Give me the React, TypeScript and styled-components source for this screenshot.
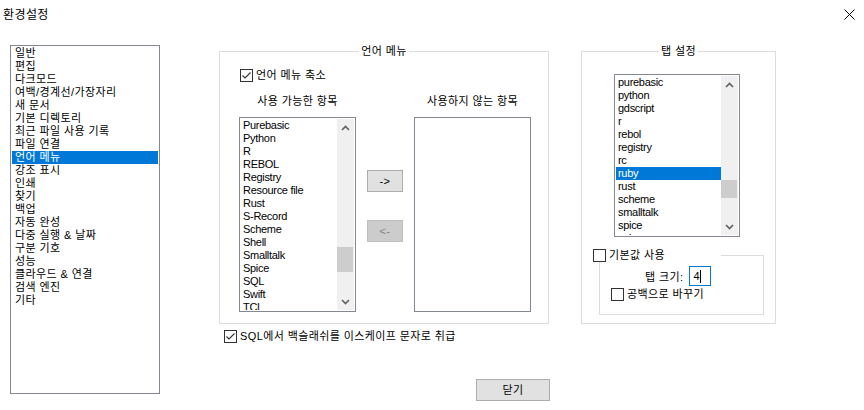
import styled, { createGlobalStyle } from 'styled-components';

const GlobalStyle = createGlobalStyle`
  html, body {
    margin: 0;
    padding: 0;
    background: #fff;
  }
  body {
    color: #000;
    font-family: 'Liberation Sans', 'Noto Sans CJK KR', sans-serif;
    font-size: 11px;
    letter-spacing: 0.4px;
  }
`;

const StyledWindow = styled.div`
  background: #fff;
  height: 410px;
  overflow: hidden;
  width: 864px;
`;

const StyledTitleBar = styled.div`
  align-items: center;
  display: flex;
  height: 29px;
  justify-content: space-between;
  padding: 0 9px 0 3px;
`;

const StyledTitle = styled.span`
  font-size: 12px;
  line-height: 14px;
`;

const StyledBody = styled.div`
  align-items: flex-start;
  display: flex;
  padding: 16px 0 0 10px;
`;

const StyledCategoryList = styled.ul`
  border: 1px solid #828790;
  box-sizing: border-box;
  height: 349px;
  list-style: none;
  margin: 0;
  padding: 1px;
  width: 150px;
`;

const StyledRow = styled.li<{ $selected?: boolean; $indent?: number; $latin?: boolean }>`
  background: ${(props) => (props.$selected ? '#0078d7' : 'transparent')};
  color: ${(props) => (props.$selected ? '#fff' : '#000')};
  height: 13px;
  letter-spacing: ${(props) => (props.$latin ? '-0.3px' : '0.4px')};
  line-height: 13px;
  overflow: hidden;
  padding-left: ${(props) => props.$indent ?? 2}px;
  white-space: nowrap;
`;

const StyledMain = styled.div`
  display: flex;
  flex-direction: column;
  margin-left: 59px;
`;

const StyledGroupRow = styled.div`
  display: flex;
  gap: 32px;
`;

const StyledGroup = styled.fieldset<{ $width: number }>`
  border: 1px solid #dcdcdc;
  box-sizing: border-box;
  height: 279px;
  margin: 0;
  min-width: 0;
  padding: 0;
  width: ${(props) => props.$width}px;
`;

const StyledLegend = styled.legend`
  height: 13px;
  line-height: 13px;
  margin: 0 auto;
  padding: 0 2px;
`;

const StyledCheckRow = styled.label<{ $top: number; $left: number }>`
  align-items: center;
  display: flex;
  gap: 3px;
  height: 13px;
  line-height: 13px;
  margin: ${(props) => `${props.$top}px 0 0 ${props.$left}px`};
  white-space: nowrap;
`;

const StyledCheckBox = styled.span`
  background: #fff;
  border: 1px solid #333;
  box-sizing: border-box;
  display: inline-flex;
  flex: none;
  height: 13px;
  width: 13px;
`;

const StyledColumns = styled.div`
  column-gap: 11px;
  display: grid;
  grid-template-columns: 117px 36px 117px;
  grid-template-rows: 13px 195px;
  margin: 13px 0 0 19px;
  row-gap: 9px;
`;

const StyledColumnHead = styled.div<{ $col: number }>`
  grid-column: ${(props) => props.$col};
  line-height: 13px;
  text-align: center;
  white-space: nowrap;
`;

const StyledListBox = styled.div<{ $width?: number; $height?: number }>`
  border: 1px solid #828790;
  box-sizing: border-box;
  display: flex;
  height: ${(props) => (props.$height ? `${props.$height}px` : '100%')};
  overflow: hidden;
  padding: 1px;
  width: ${(props) => (props.$width ? `${props.$width}px` : '100%')};
`;

const StyledRows = styled.ul`
  flex: 1;
  list-style: none;
  margin: 0;
  min-width: 0;
  overflow: hidden;
  padding: 0;
`;

const StyledScrollbar = styled.div`
  background: #f0f0f0;
  display: flex;
  flex: none;
  flex-direction: column;
  width: 17px;
`;

const StyledArrowCell = styled.div`
  align-items: center;
  display: flex;
  flex: none;
  height: 17px;
  justify-content: center;
`;

const StyledTrack = styled.div`
  flex: 1;
`;

const StyledThumb = styled.div<{ $offset: number; $size: number }>`
  background: #cdcdcd;
  height: ${(props) => props.$size}px;
  margin: ${(props) => props.$offset}px 1px 0 0;
`;

const StyledMoveColumn = styled.div`
  display: flex;
  flex-direction: column;
  gap: 28px;
  grid-column: 2;
  padding-top: 53px;
`;

const StyledButton = styled.button<{ $width: number; $disabled?: boolean }>`
  background: ${(props) => (props.$disabled ? '#cccccc' : '#e1e1e1')};
  border: 1px solid ${(props) => (props.$disabled ? '#bfbfbf' : '#adadad')};
  box-sizing: border-box;
  color: ${(props) => (props.$disabled ? '#838383' : '#000')};
  font: inherit;
  height: 22px;
  letter-spacing: inherit;
  line-height: 13px;
  margin: 0;
  padding: 0;
  width: ${(props) => props.$width}px;
`;

const StyledTabList = styled(StyledListBox)`
  margin: 16px 0 0 32px;
`;

const StyledInnerGroup = styled.fieldset`
  border: 1px solid #dcdcdc;
  box-sizing: border-box;
  height: 66px;
  margin: 12px 0 0 17px;
  min-width: 0;
  padding: 0;
  width: 165px;
`;

const StyledInnerLegend = styled.legend`
  background: #fff;
  height: 13px;
  margin-left: -7px;
  padding: 0;
  width: 128px;
`;

const StyledSizeRow = styled.div`
  align-items: center;
  display: flex;
  gap: 6px;
  margin: 4px 0 0 45px;
`;

const StyledSizeBox = styled.div`
  align-items: center;
  border: 1px solid #0078d7;
  box-sizing: border-box;
  display: flex;
  height: 20px;
  line-height: 13px;
  padding-left: 3px;
  width: 22px;
`;

const StyledCaret = styled.span`
  background: #000;
  display: inline-block;
  height: 13px;
  width: 1px;
`;

const StyledCloseRow = styled.div`
  margin: 36px 0 0 257px;
`;

const CATEGORIES = [
  '일반',
  '편집',
  '다크모드',
  '여백/경계선/가장자리',
  '새 문서',
  '기본 디렉토리',
  '최근 파일 사용 기록',
  '파일 연결',
  '언어 메뉴',
  '강조 표시',
  '인쇄',
  '찾기',
  '백업',
  '자동 완성',
  '다중 실행 & 날짜',
  '구분 기호',
  '성능',
  '클라우드 & 연결',
  '검색 엔진',
  '기타',
];

const AVAILABLE = [
  'Purebasic',
  'Python',
  'R',
  'REBOL',
  'Registry',
  'Resource file',
  'Rust',
  'S-Record',
  'Scheme',
  'Shell',
  'Smalltalk',
  'Spice',
  'SQL',
  'Swift',
  'TCL',
];

const TAB_LANGS = [
  'purebasic',
  'python',
  'gdscript',
  'r',
  'rebol',
  'registry',
  'rc',
  'ruby',
  'rust',
  'scheme',
  'smalltalk',
  'spice',
  'sql',
];

const Chevron = ({ up }: { up?: boolean }) => (
  <svg width="9" height="6" viewBox="0 0 9 6">
    <path
      d={up ? 'M1 5 L4.5 1.5 L8 5' : 'M1 1 L4.5 4.5 L8 1'}
      fill="none"
      stroke="#606060"
      strokeWidth="1.6"
    />
  </svg>
);

const Scrollbar = ({ offset, size }: { offset: number; size: number }) => (
  <StyledScrollbar>
    <StyledArrowCell>
      <Chevron up />
    </StyledArrowCell>
    <StyledTrack>
      <StyledThumb $offset={offset} $size={size} />
    </StyledTrack>
    <StyledArrowCell>
      <Chevron />
    </StyledArrowCell>
  </StyledScrollbar>
);

const CheckBox = ({ checked }: { checked?: boolean }) => (
  <StyledCheckBox>
    {checked && (
      <svg width="11" height="11" viewBox="0 0 11 11">
        <path d="M1.5 5.5 L4 8 L9.5 2.5" fill="none" stroke="#333" strokeWidth="1.1" />
      </svg>
    )}
  </StyledCheckBox>
);

const CloseIcon = () => (
  <svg width="11" height="11" viewBox="0 0 11 11">
    <path d="M0.5 0.5 L10.5 10.5 M10.5 0.5 L0.5 10.5" stroke="#000" strokeWidth="1" />
  </svg>
);

const App = () => {
  return (
    <StyledWindow>
      <GlobalStyle />
      <StyledTitleBar>
        <StyledTitle>환경설정</StyledTitle>
        <CloseIcon />
      </StyledTitleBar>
      <StyledBody>
        <StyledCategoryList>
          {CATEGORIES.map((name) => (
            <StyledRow key={name} $indent={3} $selected={name === '언어 메뉴'}>
              {name}
            </StyledRow>
          ))}
        </StyledCategoryList>
        <StyledMain>
          <StyledGroupRow>
            <StyledGroup $width={330}>
              <StyledLegend>언어 메뉴</StyledLegend>
              <StyledCheckRow $top={11} $left={20}>
                <CheckBox checked />
                언어 메뉴 축소
              </StyledCheckRow>
              <StyledColumns>
                <StyledColumnHead $col={1}>사용 가능한 항목</StyledColumnHead>
                <StyledColumnHead $col={3}>사용하지 않는 항목</StyledColumnHead>
                <StyledListBox>
                  <StyledRows>
                    {AVAILABLE.map((name) => (
                      <StyledRow key={name} $latin>
                        {name}
                      </StyledRow>
                    ))}
                  </StyledRows>
                  <Scrollbar offset={111} size={25} />
                </StyledListBox>
                <StyledMoveColumn>
                  <StyledButton $width={36}>-&gt;</StyledButton>
                  <StyledButton $width={36} $disabled>
                    &lt;-
                  </StyledButton>
                </StyledMoveColumn>
                <StyledListBox>
                  <StyledRows />
                </StyledListBox>
              </StyledColumns>
            </StyledGroup>
            <StyledGroup $width={195}>
              <StyledLegend>탭 설정</StyledLegend>
              <StyledTabList $width={126} $height={163}>
                <StyledRows>
                  {TAB_LANGS.map((name) => (
                    <StyledRow key={name} $latin $selected={name === 'ruby'}>
                      {name}
                    </StyledRow>
                  ))}
                </StyledRows>
                <Scrollbar offset={87} size={18} />
              </StyledTabList>
              <StyledInnerGroup>
                <StyledInnerLegend>
                  <StyledCheckRow $top={0} $left={0}>
                    <CheckBox />
                    기본값 사용
                  </StyledCheckRow>
                </StyledInnerLegend>
                <StyledSizeRow>
                  <span>탭 크기:</span>
                  <StyledSizeBox>
                    4<StyledCaret />
                  </StyledSizeBox>
                </StyledSizeRow>
                <StyledCheckRow $top={2} $left={11}>
                  <CheckBox />
                  공백으로 바꾸기
                </StyledCheckRow>
              </StyledInnerGroup>
            </StyledGroup>
          </StyledGroupRow>
          <StyledCheckRow $top={6} $left={5}>
            <CheckBox checked />
            SQL에서 백슬래쉬를 이스케이프 문자로 취급
          </StyledCheckRow>
          <StyledCloseRow>
            <StyledButton $width={74}>닫기</StyledButton>
          </StyledCloseRow>
        </StyledMain>
      </StyledBody>
    </StyledWindow>
  );
};

export default App;
